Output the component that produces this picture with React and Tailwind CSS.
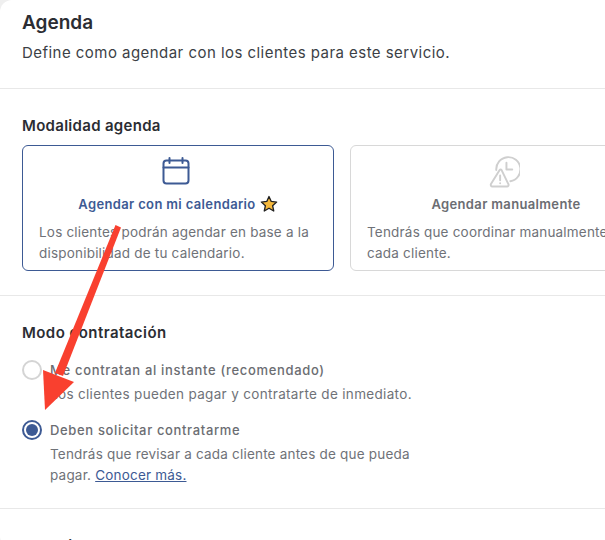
const font = "font-['Inter','Liberation_Sans',sans-serif]";

const CalendarIcon = () => (
  <svg width="28" height="28" viewBox="0 0 28 28" fill="none" stroke="#3d5a94" strokeWidth="2" strokeLinecap="round" strokeLinejoin="round">
    <rect x="1.500" y="3.500" width="25" height="23" rx="3" />
    <path d="M1.500 10.500h25M7.500 1v5M20.500 1v5" />
  </svg>
);

const ClockWarnIcon = () => (
  <svg width="31" height="33" viewBox="0 0 32 34" fill="none" stroke="#cfcfcf" strokeWidth="2" strokeLinecap="round" strokeLinejoin="round">
    <path d="M7.500 15.500A12.500 12.500 0 1 1 22 27" />
    <path d="M18 8v7h6" />
    <path d="M11 15.500L2 30a1.600 1.600 0 0 0 1.400 2.400h15.200a1.600 1.600 0 0 0 1.400-2.400L13 15.500a1.200 1.200 0 0 0-2 0z" fill="#fff" />
    <path d="M11.500 21v5M11.500 29v.2" />
  </svg>
);

const Star = () => (
  <svg width="18" height="18" viewBox="0 0 24 24" fill="#f6b93b" stroke="#222" strokeWidth="1.800" strokeLinejoin="round">
    <path d="M12 2l3 6.600 7.200.8-5.400 4.800 1.500 7.100L12 17.700l-6.300 3.600 1.500-7.100L1.800 9.400 9 8.600z" />
  </svg>
);

const Option = ({ icon, title, titleClass, body, boxClass }) => (
  <div className={`flex h-[126px] w-[312px] shrink-0 flex-col rounded-md border px-4 pt-2.5 ${boxClass}`}>
    <div className="mr-1 flex h-[30px] items-center justify-center">{icon}</div>
    <p className={`mt-2 flex items-center justify-center gap-1 text-[13px] leading-5 font-semibold tracking-[0.35px] ${titleClass}`}>{title}</p>
    <p className="mt-2 text-[13.5px] leading-[21px] tracking-[0.2px] whitespace-nowrap text-[#6f7278]">{body}</p>
  </div>
);

const Radio = ({ checked }) => (
  <span className={`flex size-5 shrink-0 items-center justify-center rounded-full border-2 ${checked ? 'border-[#3d5a94]' : 'border-[#d4d4d4]'}`}>
    {checked && <span className="size-3 rounded-full bg-[#3d5a94]" />}
  </span>
);

export default function App() {
  return (
    <div className={`relative h-[540px] w-[605px] overflow-hidden bg-[#efefef] ${font}`}>
      <div className="h-[548px] w-[640px] rounded-l-[12px] bg-white">
        <section className="h-[89px] border-b border-[#e8e8e8] px-[22px] pt-[11px]">
          <h1 className="text-[19px] leading-6 font-semibold text-[#2b2d33]">Agenda</h1>
          <p className="mt-[6px] text-[15px] leading-6 tracking-[0.46px] text-[#3c3f46]">Define como agendar con los clientes para este servicio.</p>
        </section>

        <section className="h-[207px] border-b border-[#e8e8e8] px-[22px] pt-[27px]">
          <h2 className="text-[15px] leading-5 font-semibold tracking-[0.3px] text-[#2b2d33]">Modalidad agenda</h2>
          <div className="mt-[9px] flex gap-4">
            <Option
              boxClass="border-[#3d5a94]"
              icon={<CalendarIcon />}
              title={<>Agendar con mi calendario <Star /></>}
              titleClass="text-[#3d5a94]"
              body={<>Los clientes podrán agendar en base a la<br />disponibilidad de tu calendario.</>}
            />
            <Option
              boxClass="border-[#d8d8d8]"
              icon={<ClockWarnIcon />}
              title="Agendar manualmente"
              titleClass="text-[#6b6d72]"
              body={<>Tendrás que coordinar manualmente con<br />cada cliente.</>}
            />
          </div>
        </section>

        <section className="h-[213px] border-b border-[#e8e8e8] px-[22px] pt-[27px]">
          <h2 className="text-[15px] leading-5 font-semibold tracking-[0.45px] text-[#2b2d33]">Modo contratación</h2>
          <div className="mt-[17px] flex gap-2">
            <Radio />
            <div>
              <p className="text-[13px] leading-5 font-medium tracking-[0.68px] text-[#6b6d72]">Me contratan al instante (recomendado)</p>
              <p className="mt-1 text-[13.5px] leading-5 tracking-[0.33px] text-[#6f7278]">Los clientes pueden pagar y contratarte de inmediato.</p>
            </div>
          </div>
          <div className="mt-4 flex gap-2">
            <Radio checked />
            <div>
              <p className="text-[13px] leading-5 font-medium tracking-[0.65px] text-[#6b6d72]">Deben solicitar contratarme</p>
              <p className="mt-1 w-[380px] text-[13.5px] leading-[21px] tracking-[0.2px] text-[#6f7278]">
                Tendrás que revisar a cada cliente antes de que pueda pagar. <a className="text-[#3d5a94] underline">Conocer más.</a>
              </p>
            </div>
          </div>
        </section>

        <h2 className="px-[22px] pt-[27px] text-[15px] leading-5 font-semibold tracking-[0.3px] text-[#2b2d33]">Modalidad</h2>
      </div>

      {/* annotation arrow drawn over the screenshot */}
      <svg className="absolute top-0 left-0" width="605" height="540" viewBox="0 0 605 540">
        <path d="M115.500 225L121 227.500L63 376L55 373z" fill="#f9402f" />
        <path d="M43 370L45 410L74 382z" fill="#f9402f" />
      </svg>
    </div>
  );
}
